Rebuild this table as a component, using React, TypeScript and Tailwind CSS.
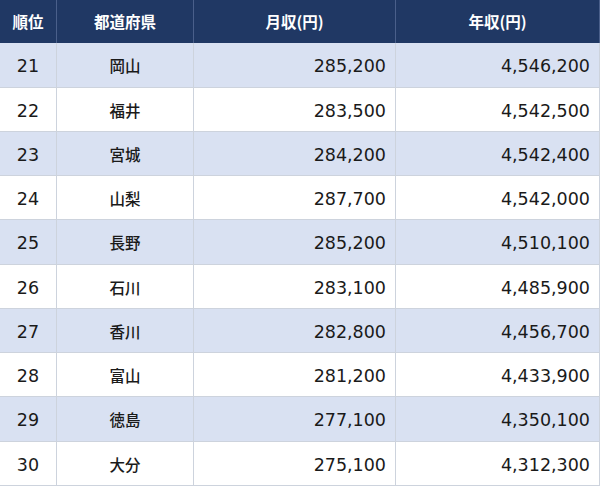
import React from 'react';

type Row = { rank: number; pref: string; month: string; year: string };

const rows: Row[] = [
  { rank: 21, pref: '岡山', month: '285,200', year: '4,546,200' },
  { rank: 22, pref: '福井', month: '283,500', year: '4,542,500' },
  { rank: 23, pref: '宮城', month: '284,200', year: '4,542,400' },
  { rank: 24, pref: '山梨', month: '287,700', year: '4,542,000' },
  { rank: 25, pref: '長野', month: '285,200', year: '4,510,100' },
  { rank: 26, pref: '石川', month: '283,100', year: '4,485,900' },
  { rank: 27, pref: '香川', month: '282,800', year: '4,456,700' },
  { rank: 28, pref: '富山', month: '281,200', year: '4,433,900' },
  { rank: 29, pref: '徳島', month: '277,100', year: '4,350,100' },
  { rank: 30, pref: '大分', month: '275,100', year: '4,312,300' },
];

const cols = 'grid grid-cols-[57px_137px_202px_203px]';
const num = "font-['DejaVu_Sans','Noto_Sans_CJK_JP',sans-serif] text-[17.5px] text-[#1a1a1a]";
const jp = "font-['Noto_Sans_CJK_JP',sans-serif] text-[15.5px]";

export default function App() {
  return (
    <div className="w-[600px] h-[486px] bg-white flex flex-col">
      {/* header */}
      <div className={`${cols} flex-1 bg-[#203864] text-white font-bold ${jp} border-r border-[#4a5f8a]`}>
        <div className="flex items-center justify-center border-r border-[#4a5f8a]">順位</div>
        <div className="flex items-center justify-center border-r border-[#4a5f8a]">都道府県</div>
        <div className="flex items-center justify-center border-r border-[#4a5f8a]">月収(円)</div>
        <div className="flex items-center justify-center">年収(円)</div>
      </div>

      {rows.map((r, i) => (
        <div
          key={r.rank}
          className={`${cols} flex-1 border-b border-r border-[#cdd3dd] ${i % 2 === 0 ? 'bg-[#d9e1f2]' : 'bg-white'}`}
        >
          <div className={`flex items-center justify-center pt-[3px] border-r border-[#cdd3dd] ${num}`}>{r.rank}</div>
          <div className={`flex items-center justify-center pt-[2px] border-r border-[#cdd3dd] font-medium text-[#1a1a1a] ${jp}`}>
            {r.pref}
          </div>
          <div className={`flex items-center justify-end pr-[9px] pt-[3px] border-r border-[#cdd3dd] ${num}`}>{r.month}</div>
          <div className={`flex items-center justify-end pr-[9px] pt-[3px] ${num}`}>{r.year}</div>
        </div>
      ))}
    </div>
  );
}
